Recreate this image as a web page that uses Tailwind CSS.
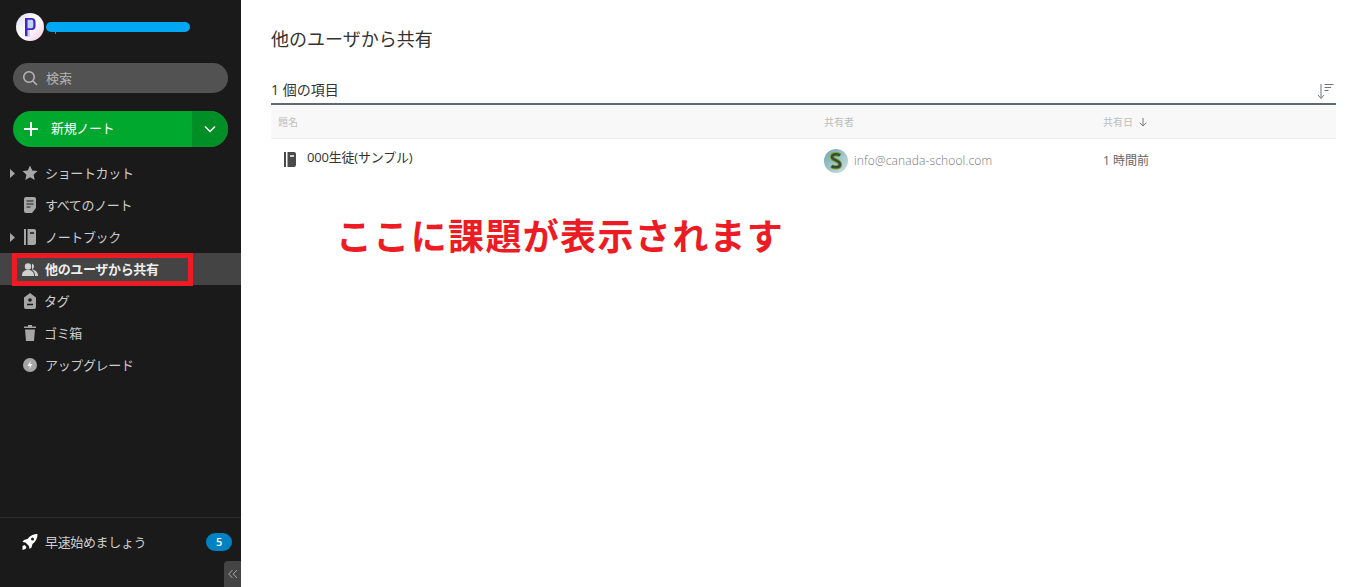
<!DOCTYPE html>
<html lang="ja">
<head>
  <meta charset="UTF-8" />
  <title>他のユーザから共有</title>
  <script src="https://cdn.jsdelivr.net/npm/@tailwindcss/browser@4"></script>
</head>
<body class="h-[587px] overflow-hidden bg-white font-['Open_Sans','Noto_Sans_CJK_JP',sans-serif]">
  <div class="flex h-[587px]">

    <!-- サイドバー -->
    <aside class="relative flex h-full w-[241px] shrink-0 flex-col bg-[#1a1a1a] text-[13px] tracking-[-0.35px] text-[#cccccc]">
      <!-- アカウント -->
      <div class="flex h-[54px] items-center pl-[16px]">
        <div class="flex h-[28px] w-[28px] items-center justify-center rounded-full bg-gradient-to-br from-[#dcdcf0] via-[#ffffff] to-[#f5c8e6]">
          <svg width="12" height="21" viewBox="0 0 12 21">
            <path d="M1 1h6.500a4 4 0 0 1 4 4v4a4 4 0 0 1-4 4H6v7H1z" fill="#bcd8f8" />
            <path d="M1 1h6.500a4 4 0 0 1 4 4v4a4 4 0 0 1-4 4H3.500v6H1zM3.500 2.800v8.400h3.800a2 2 0 0 0 2-2V4.800a2 2 0 0 0-2-2z" fill="#4b22c9" fill-rule="evenodd" />
          </svg>
        </div>
        <div class="relative ml-[2px] h-[10px] w-[144px] rounded-full bg-[#00a8f3]">
          <div class="absolute left-[9px] top-[10px] h-[2px] w-[1px] bg-[#00a8f3]"></div>
        </div>
      </div>

      <!-- 検索 -->
      <div class="mx-[13px] mt-[9px] flex h-[30px] items-center rounded-full bg-[#525252] pl-[9px] text-[13px] tracking-normal text-[#b3b3b3]">
        <svg width="16" height="16" viewBox="0 0 16 16" fill="none" stroke="#b8b8b8" stroke-width="1.500">
          <circle cx="7" cy="7" r="5.250" />
          <path d="M11 11l4 4" />
        </svg>
        <span class="ml-[8px] mt-[2px]">検索</span>
      </div>

      <!-- 新規ノート -->
      <div class="mx-[13px] mt-[18px] flex h-[36px] overflow-hidden rounded-full bg-[#00a82d] text-white">
        <div class="flex flex-1 items-center pl-[11px] text-[13px]">
          <svg width="14" height="14" viewBox="0 0 14 14" fill="none" stroke="#ffffff" stroke-width="2">
            <path d="M7 0v14M0 7h14" />
          </svg>
          <span class="ml-[13px]">新規ノート</span>
        </div>
        <div class="flex w-[36px] items-center justify-center bg-[#008f26]">
          <svg width="12" height="8" viewBox="0 0 12 8" fill="none" stroke="#ffffff" stroke-width="1.500">
            <path d="M1 1.500l5 5 5-5" />
          </svg>
        </div>
      </div>

      <!-- メニュー -->
      <nav class="mt-[10px]">
        <div class="relative flex h-[32px] items-center pl-[22px]">
          <svg class="absolute left-[10px] top-[12px]" width="5" height="9" viewBox="0 0 5 9"><path d="M0 0l5 4.500-5 4.500z" fill="#a6a6a6" /></svg>
          <svg width="16" height="16" viewBox="0 0 16 16"><path d="M8 .5l2.300 5 5.200.6-3.900 3.600 1.100 5.300L8 12.300 3.300 15l1.100-5.300L.5 6.100l5.200-.6z" fill="#a6a6a6" /></svg>
          <span class="ml-[7px] mt-[2px]">ショートカット</span>
        </div>
        <div class="flex h-[32px] items-center pl-[24px]">
          <svg width="12" height="16" viewBox="0 0 12 16"><path d="M2 0h8a2 2 0 0 1 2 2v9l-4 5H2a2 2 0 0 1-2-2V2a2 2 0 0 1 2-2z" fill="#a6a6a6" /><path d="M2.500 4h7M2.500 7h7M2.500 10h4" stroke="#1a1a1a" stroke-width="1.200" /></svg>
          <span class="ml-[9px] mt-[2px]">すべてのノート</span>
        </div>
        <div class="relative flex h-[32px] items-center pl-[24px]">
          <svg class="absolute left-[10px] top-[12px]" width="5" height="9" viewBox="0 0 5 9"><path d="M0 0l5 4.500-5 4.500z" fill="#a6a6a6" /></svg>
          <svg width="12" height="16" viewBox="0 0 12 16"><path d="M0 0h2v16H0zM3.500 0H10a2 2 0 0 1 2 2v12a2 2 0 0 1-2 2H3.500z" fill="#a6a6a6" /><path d="M6 4h4" stroke="#1a1a1a" stroke-width="1.500" /></svg>
          <span class="ml-[9px] mt-[2px]">ノートブック</span>
        </div>
        <div class="relative flex h-[32px] items-center bg-[#444444] pl-[22px] font-bold text-[#eeeeee]">
          <svg width="16" height="13" viewBox="0 0 16 13" fill="#cfcfcf"><circle cx="6" cy="3.500" r="3.200" /><path d="M0 12c0-3 2.500-5 6-5s6 2 6 5v1H0z" /><path d="M10 .6a3.200 3.200 0 0 1 0 6c3 .5 5.500 2 6 5.400v1h-3c0-3-1-5-3-6z" /></svg>
          <span class="ml-[7px] mt-[2px]">他のユーザから共有</span>
          <div class="absolute left-[12px] top-0 h-[33px] w-[181px] border-[5px] border-[#ed1c24]"></div>
        </div>
        <div class="flex h-[32px] items-center pl-[24px]">
          <svg width="12" height="16" viewBox="0 0 12 16"><path d="M6 0l6 4.500V14a2 2 0 0 1-2 2H2a2 2 0 0 1-2-2V4.500z" fill="#a6a6a6" /><circle cx="6" cy="7" r="1.800" fill="#1a1a1a" /><path d="M3 11.500h6" stroke="#1a1a1a" stroke-width="1.500" /></svg>
          <span class="ml-[8px] mt-[2px]">タグ</span>
        </div>
        <div class="flex h-[32px] items-center pl-[24px]">
          <svg width="12" height="16" viewBox="0 0 12 16" fill="#a6a6a6"><path d="M4 0h4v1.500h4V3H0V1.500h4zM1 4.500h10l-1 11.500H2z" /></svg>
          <span class="ml-[8px] mt-[2px]">ゴミ箱</span>
        </div>
        <div class="flex h-[32px] items-center pl-[23px]">
          <svg width="14" height="14" viewBox="0 0 14 14"><circle cx="7" cy="7" r="7" fill="#a6a6a6" /><path d="M8 2.500L4.500 8H7l-1 3.500L9.500 6H7z" fill="#ffffff" /></svg>
          <span class="ml-[8px] mt-[2px]">アップグレード</span>
        </div>
      </nav>

      <!-- 下部 -->
      <div class="mt-auto h-[70px] border-t border-[#2e2e2e]">
        <div class="flex h-[48px] items-center pl-[21px] pr-[9px]">
          <svg width="17" height="16" viewBox="0 0 16 16" fill="#ffffff"><path d="M16 0c-4 0-7.500 1.500-10 5L2.500 6 1 8l3 .5L7.500 12l.5 3 2-1.500 1-3.500c3.500-2.500 5-6 5-10zM11 3.500a1.500 1.500 0 1 1 0 3 1.500 1.500 0 0 1 0-3z" fill-rule="evenodd" /><path d="M1 12l2-1 2 2-1 2-3 1z" /></svg>
          <span class="ml-[7px] mt-[2px]">早速始めましょう</span>
          <span class="ml-auto flex h-[18px] w-[26px] items-center justify-center rounded-full bg-[#0081c2] text-[11px] font-semibold text-white">5</span>
        </div>
      </div>

      <button class="absolute bottom-0 right-0 flex h-[26px] w-[17px] items-center justify-center rounded-tl-[4px] bg-[#444444]">
        <svg width="10" height="10" viewBox="0 0 10 10" fill="none" stroke="#a6a6a6" stroke-width="1"><path d="M4.500 1L.7 5l3.800 4M9 1L5.200 5 9 9" /></svg>
      </button>
    </aside>

    <!-- メイン -->
    <main class="min-w-0 flex-1 pl-[30px] pr-[30px] text-[#4a4a4a]">
      <h1 class="mt-[27px] text-[18px] leading-[24px] font-normal text-[#333333]">他のユーザから共有</h1>

      <div class="mt-[29px] flex h-[25px] items-center justify-between border-b-2 border-[#5f6b70] pb-[4px] text-[14px] text-[#333333]">
        <span>1 個の項目</span>
        <svg class="mr-[2px] mt-[5px]" width="17" height="16" viewBox="0 0 17 16" fill="none" stroke="#6f7478" stroke-width="1"><path d="M4 0v14M1 11l3 3.500L7 11" /><path d="M7.500 .5h9M7.500 3.500h6.500M7.500 6.500h4" /></svg>
      </div>

      <!-- 一覧 -->
      <div class="grid h-[34px] grid-cols-[553px_279px_1fr] items-center border-b border-[#ececec] bg-[#f8f8f8] pt-[1px] text-[10px] text-[#bdbdbd]">
        <span class="pl-[7px]">題名</span>
        <span>共有者</span>
        <span class="flex items-center gap-[6px]">共有日
          <svg width="8" height="9" viewBox="0 0 8 9" fill="none" stroke="#777777" stroke-width="1"><path d="M4 0v8M.7 4.700L4 8l3.300-3.300" /></svg>
        </span>
      </div>
      <div class="grid h-[44px] grid-cols-[553px_279px_1fr] items-center text-[12px]">
        <span class="flex items-center pl-[13px] text-[13px] tracking-[-0.2px] text-[#333333]">
          <svg class="-mt-[4px]" width="12" height="15" viewBox="0 0 12 15"><path d="M0 0h2v15H0zM3.500 0H10a2 2 0 0 1 2 2v11a2 2 0 0 1-2 2H3.500z" fill="#4a4a4a" /><path d="M6 4h4" stroke="#ffffff" stroke-width="1.500" /></svg>
          <span class="ml-[11px] -mt-[6px]">000生徒(サンプル)</span>
        </span>
        <span class="flex items-center font-light tracking-[0.13px] text-[#777777]">
          <span class="flex h-[24px] w-[24px] items-center justify-center rounded-full bg-gradient-to-br from-[#6fa5ab] to-[#cfe3e6]">
            <svg width="14" height="18" viewBox="0 0 14 18" fill="none"><path d="M11 3.500C9 1.500 3 1.500 3 5c0 3.500 8 3 8 7.500 0 3.500-6 3.500-8.500 1.500" stroke="#6fae3a" stroke-width="4.500" /><path d="M11 3.500C9 1.500 3 1.500 3 5c0 3.500 8 3 8 7.500 0 3.500-6 3.500-8.500 1.500" stroke="#44443a" stroke-width="2.500" /></svg>
          </span>
          <span class="ml-[6px]">info@canada-school.com</span>
        </span>
        <span class="text-[#666666]">1 時間前</span>
      </div>

      <p class="ml-[65px] mt-[32px] text-[36px] leading-[44px] font-bold tracking-[1.35px] text-[#ed1c24]">ここに課題が表示されます</p>
    </main>
  </div>
</body>
</html>
